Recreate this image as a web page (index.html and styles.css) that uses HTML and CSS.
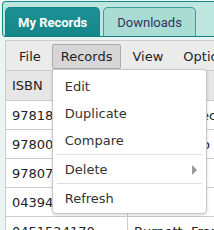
FILE: index.html
```html
<!DOCTYPE html>
<html>
<head>
<meta charset="utf-8">
<link rel="stylesheet" href="styles.css">
</head>
<body>
<div class="tabs">
  <ul class="tab-nav">
    <li class="tab active">My Records</li>
    <li class="tab">Downloads</li>
  </ul>
  <div class="panel">
    <div class="menubar">
      <div class="mitem">File</div>
      <div class="mitem open">Records
        <div class="dropdown">
          <div class="ditem">Edit</div>
          <div class="ditem">Duplicate</div>
          <div class="ditem">Compare</div>
          <div class="sep"></div>
          <div class="ditem sub">Delete<span class="arrow"></span></div>
          <div class="sep"></div>
          <div class="ditem">Refresh</div>
        </div>
      </div>
      <div class="mitem">View</div>
      <div class="mitem">Options</div>
      <div class="mitem">Help</div>
    </div>
    <table class="grid">
      <tr><th class="c1">ISBN</th><th>Author</th></tr>
      <tr><td class="c1">9781853260087</td><td>Wells, Rebecca</td></tr>
      <tr><td class="c1">9780060935467</td><td>Tolstoy, Leo</td></tr>
      <tr><td class="c1">9780743273565</td><td>Poe, Edgar</td></tr>
      <tr><td class="c1">0439420891</td><td>Rowling, J.</td></tr>
      <tr><td class="c1">0451524170</td><td>Burnett, Frances</td></tr>
    </table>
  </div>
</div>
</body>
</html>
```
FILE: styles.css
```css
html, body {
  margin: 0;
  padding: 0;
}
body {
  background: #eaf5f3;
  overflow: hidden;
  width: 214px;
  height: 230px;
  font-family: "DejaVu Sans", Verdana, sans-serif;
  font-size: 13px;
  color: #222;
}
.tabs {
  margin: 1px 0 0 2px;
  width: 420px;
}
.tab-nav {
  list-style: none;
  margin: 0;
  padding: 5px 0 0 2px;
  box-sizing: border-box;
  height: 36px;
  border: 1px solid #17888b;
  border-bottom: 1px solid #137f83;
  border-radius: 4px;
  background: #bde6df;
  display: flex;
  gap: 3px;
  align-items: flex-end;
}
.tab {
  box-sizing: border-box;
  height: 29px;
  padding: 0 13px;
  border: 1px solid #3c9e9d;
  border-bottom: none;
  border-radius: 5px 5px 0 0;
  display: flex;
  align-items: center;
  font-family: Roboto, "Liberation Sans", sans-serif;
  font-size: 13px;
  color: #33335c;
  background: #a9ddd4;
}
.tab.active {
  padding: 0 12px;
  background: linear-gradient(#1d9195, #15868a);
  border-color: #15868a;
  color: #fff;
  font-weight: bold;
}
.panel {
  padding: 3px 0 0 3px;
}
.menubar {
  display: flex;
  gap: 2px;
  padding: 3px 4px 1px;
  background: #ebebeb;
  border: 1px solid #cccccc;
  border-right: none;
}
.mitem {
  position: relative;
  box-sizing: border-box;
  height: 25px;
  padding: 0 8px;
  border: 1px solid transparent;
  border-radius: 2px;
  display: flex;
  align-items: center;
  white-space: nowrap;
  color: #1e1e2a;
}
.mitem.open {
  background: #d6d6d6;
  border-color: #aaaaaa;
}
.dropdown {
  position: absolute;
  left: -1px;
  top: calc(100% + 1px);
  width: 155px;
  box-sizing: border-box;
  padding: 3px 0 1px;
  background: #fff;
  border: 1px solid #c9c9c9;
  border-radius: 0 3px 4px 4px;
  box-shadow: 0 1px 3px rgba(0, 0, 0, 0.18);
  z-index: 5;
  color: #333;
}
.ditem {
  height: 27px;
  padding: 0 12px;
  display: flex;
  align-items: center;
  justify-content: space-between;
}
.sep {
  height: 1px;
  margin: 0 4px 1px;
  background: #dddddd;
}
.arrow {
  width: 0;
  height: 0;
  border-top: 5px solid transparent;
  border-bottom: 5px solid transparent;
  border-left: 5px solid #9a9a9a;
  margin-right: -3px;
}
.grid {
  border-collapse: collapse;
  background: #fff;
  white-space: nowrap;
}
.grid th, .grid td {
  border: 1px solid #cccccc;
  border-top: none;
  padding: 0 6px;
  text-align: left;
  font-weight: normal;
  color: #222;
}
.grid th {
  background: #e6e6e6;
  height: 29px;
}
.grid td {
  height: 28px;
}
.grid .c1 {
  width: 109px;
  max-width: 109px;
  overflow: hidden;
}
```
